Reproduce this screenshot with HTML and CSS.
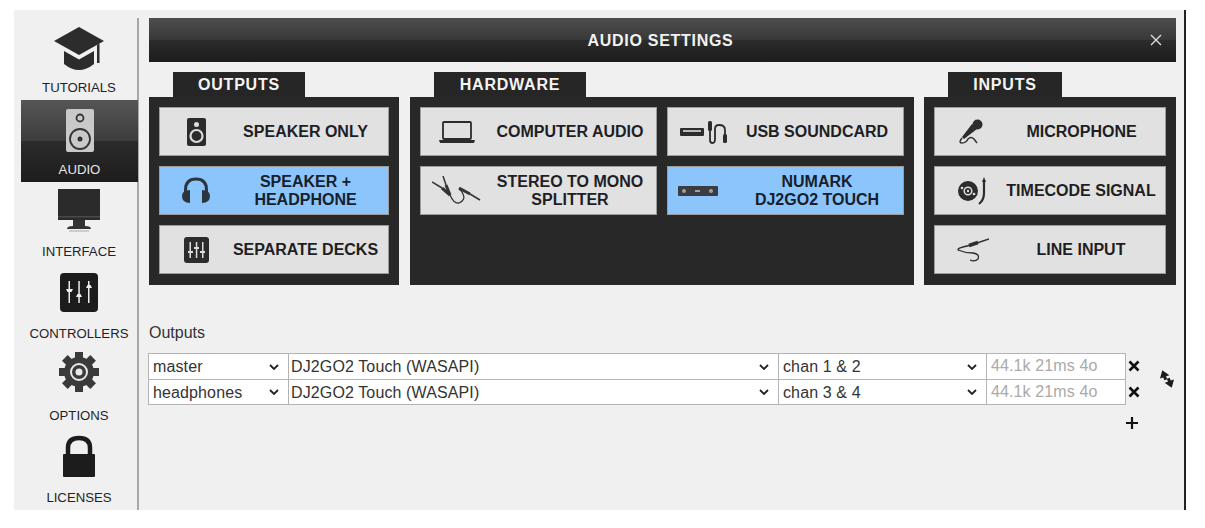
FILE: index.html
```html
<!DOCTYPE html>
<html lang="en">
<head>
<meta charset="utf-8">
<title>Audio Settings</title>
<link rel="stylesheet" href="styles.css">
</head>
<body>
<div class="window">
  <nav class="sidebar">
    <div class="nav-item">
      <svg class="nav-icon" width="60" height="58" viewBox="0 0 60 58"><path fill="#2c2c2c" d="M30 9 L55 23 L30 37 L5 23Z"/><path fill="#2c2c2c" d="M15 33 L30 41.500 L45 33 L45 46 Q30 58 15 46Z"/><path fill="#2c2c2c" d="M48 27 L50.500 25.500 L50.500 45 L48 45Z"/></svg>
      <span class="nav-label">TUTORIALS</span>
    </div>
    <div class="nav-item active">
      <svg class="nav-icon" width="60" height="58" viewBox="0 0 60 58"><rect x="16" y="9" width="28" height="43" rx="2" fill="#c9c9c9"/><circle cx="30" cy="18" r="3.500" fill="none" stroke="#333" stroke-width="1.800"/><circle cx="30" cy="39" r="10" fill="none" stroke="#333" stroke-width="1.800"/><circle cx="30" cy="39" r="2.500" fill="#333"/></svg>
      <span class="nav-label">AUDIO</span>
    </div>
    <div class="nav-item">
      <svg class="nav-icon" width="60" height="58" viewBox="0 0 60 58"><rect x="9" y="7" width="42" height="31" fill="#2b2b2b"/><rect x="9" y="34" width="42" height="1.500" fill="#4a4a4a"/><rect x="24" y="38" width="12" height="6" fill="#333"/><path fill="#333" d="M18 47 Q18 44 24 44 L36 44 Q42 44 42 47Z"/><rect x="20" y="48" width="20" height="2" fill="#ccc"/></svg>
      <span class="nav-label">INTERFACE</span>
    </div>
    <div class="nav-item">
      <svg class="nav-icon" width="60" height="58" viewBox="0 0 60 58"><rect x="11" y="9" width="38" height="39" rx="4" fill="#1c1c1c"/><g fill="#eee"><rect x="19.500" y="17" width="1.500" height="22"/><rect x="29.300" y="17" width="1.500" height="22"/><rect x="39" y="17" width="1.500" height="22"/><path d="M17 25 L24 25 L22.500 28 L18.500 28Z"/><path d="M27 33 L33 33 L31.500 30 L28.500 30Z"/><path d="M37 24 L43 24 L41.500 21 L38.500 21Z"/></g></svg>
      <span class="nav-label">CONTROLLERS</span>
    </div>
    <div class="nav-item">
      <svg class="nav-icon" width="60" height="58" viewBox="0 0 60 58"><g fill="#3a3a3a"><circle cx="30" cy="26" r="15"/><rect x="26" y="6" width="8" height="40"/><rect x="26" y="6" width="8" height="40" transform="rotate(45 30 26)"/><rect x="26" y="6" width="8" height="40" transform="rotate(90 30 26)"/><rect x="26" y="6" width="8" height="40" transform="rotate(135 30 26)"/></g><circle cx="30" cy="26" r="8" fill="none" stroke="#e8e8e8" stroke-width="2"/><circle cx="30" cy="26" r="3.500" fill="#e8e8e8"/></svg>
      <span class="nav-label">OPTIONS</span>
    </div>
    <div class="nav-item">
      <svg class="nav-icon" width="60" height="58" viewBox="0 0 60 58"><path fill="none" stroke="#1c1c1c" stroke-width="4.500" d="M19 27 L19 20 Q19 10 30 10 Q41 10 41 20 L41 27"/><rect x="14" y="26" width="32" height="23" rx="1" fill="#1c1c1c"/></svg>
      <span class="nav-label">LICENSES</span>
    </div>
  </nav>

  <main class="content">
    <header class="titlebar">
      <span class="title">AUDIO SETTINGS</span>
      <svg class="close" width="14" height="14" viewBox="0 0 14 14"><path d="M2 2 L12 12 M12 2 L2 12" stroke="#ddd" stroke-width="1.400"/></svg>
    </header>

    <div class="groups">
      <section class="group group-outputs">
        <div class="tab tab-outputs">OUTPUTS</div>
        <div class="panel panel-single">
          <div class="btn">
            <span class="btn-icon"><svg width="19" height="28" viewBox="0 0 19 28"><rect width="19" height="28" rx="2" fill="#2c2c2c"/><circle cx="9.500" cy="6.500" r="2.500" fill="#ddd"/><circle cx="9.500" cy="18" r="6" fill="none" stroke="#ddd" stroke-width="2.200"/></svg></span>
            <span class="btn-text">SPEAKER ONLY</span>
          </div>
          <div class="btn on">
            <span class="btn-icon"><svg width="28" height="27" viewBox="0 0 28 27"><path d="M3.500 17 L3.500 13 Q3.500 2 14 2 Q24.500 2 24.500 13 L24.500 17" fill="none" stroke="#2c3640" stroke-width="3"/><path d="M8 13 L8 26 Q0 26 0 19 Q0 13 8 13Z" fill="#2c3640"/><path d="M20 13 L20 26 Q28 26 28 19 Q28 13 20 13Z" fill="#2c3640"/></svg></span>
            <span class="btn-text">SPEAKER +<br>HEADPHONE</span>
          </div>
          <div class="btn">
            <span class="btn-icon"><svg width="25" height="26" viewBox="0 0 25 26"><rect width="25" height="26" rx="3" fill="#2c2c2c"/><g fill="#ddd"><rect x="5.500" y="5" width="1.500" height="16"/><rect x="11.800" y="5" width="1.500" height="16"/><rect x="18" y="5" width="1.500" height="16"/><rect x="4" y="14" width="5" height="2"/><rect x="10" y="10" width="5" height="2"/><rect x="16" y="14" width="5" height="2"/></g></svg></span>
            <span class="btn-text">SEPARATE DECKS</span>
          </div>
        </div>
      </section>

      <section class="group group-hardware">
        <div class="tab tab-hardware">HARDWARE</div>
        <div class="panel panel-double">
          <div class="btn">
            <span class="btn-icon"><svg width="36" height="24" viewBox="0 0 36 24"><rect x="4" y="2" width="28" height="17" rx="1" fill="none" stroke="#2c2c2c" stroke-width="1.800"/><path d="M0 20 L36 20 L35 23 L1 23Z" fill="#2c2c2c"/></svg></span>
            <span class="btn-text">COMPUTER AUDIO</span>
          </div>
          <div class="btn">
            <span class="btn-icon"><svg width="48" height="24" viewBox="0 0 48 24"><rect x="0" y="8" width="24" height="8" rx="1" fill="#2c2c2c"/><rect x="3" y="10" width="18" height="2" fill="#bbb"/><rect x="28" y="1" width="4" height="10" rx="1.500" fill="#2c2c2c"/><rect x="43" y="14" width="4" height="9" rx="1.500" fill="#2c2c2c"/><path d="M30 10 L30 20 Q30 23 32.500 23 Q35 23 35 19 L35 9 Q35 5 39 5 Q45 5 45 10 L45 15" fill="none" stroke="#2c2c2c" stroke-width="1.800"/></svg></span>
            <span class="btn-text">USB SOUNDCARD</span>
          </div>
          <div class="btn">
            <span class="btn-icon"><svg width="50" height="30" viewBox="0 0 50 30"><g fill="none" stroke="#333"><path d="M0 6 L10 12" stroke-width="1.500"/><path d="M10 12 L18 19" stroke-width="3"/><path d="M11 0 L14 9" stroke-width="1.500"/><path d="M14 9 L18 19" stroke-width="3"/><path d="M18 19 Q22 28 27 27 Q34 24 31 18 Q29 13 27 14" stroke-width="1.300"/><path d="M27 12 L38 18" stroke-width="3"/><path d="M38 18 L48 24" stroke-width="1.500"/></g></svg></span>
            <span class="btn-text">STEREO TO MONO<br>SPLITTER</span>
          </div>
          <div class="btn on">
            <span class="btn-icon numark"><svg width="40" height="10" viewBox="0 0 40 10"><rect width="40" height="10" rx="1" fill="#3a3c44"/><g fill="#a8a098"><circle cx="6" cy="5" r="2"/><circle cx="33" cy="5" r="2"/><rect x="17" y="4" width="5" height="2"/></g></svg></span>
            <span class="btn-text">NUMARK<br>DJ2GO2 TOUCH</span>
          </div>
        </div>
      </section>

      <section class="group group-inputs">
        <div class="tab tab-inputs">INPUTS</div>
        <div class="panel panel-single">
          <div class="btn">
            <span class="btn-icon"><svg width="24" height="26" viewBox="0 0 24 26"><path d="M13 5 L18 10 L5 20 L3 18Z" fill="#2c2c2c"/><circle cx="18.500" cy="5.500" r="5" fill="#2c2c2c"/><path d="M3 19 Q-1 24 3 24 Q7 24 9 20 Q12 17 15 20 L18 24" fill="none" stroke="#2c2c2c" stroke-width="1.400"/></svg></span>
            <span class="btn-text">MICROPHONE</span>
          </div>
          <div class="btn">
            <span class="btn-icon inset-right"><svg width="30" height="28" viewBox="0 0 30 28"><circle cx="10" cy="14" r="10" fill="#2c2c2c"/><circle cx="10" cy="14" r="3.800" fill="none" stroke="#ddd" stroke-width="1.500"/><circle cx="10" cy="14" r="1.200" fill="#ddd"/><circle cx="4" cy="11" r="1.300" fill="#ddd"/><circle cx="16" cy="17" r="1.300" fill="#ddd"/><path d="M26 3 L26 16 Q26 23 21 27" fill="none" stroke="#2c2c2c" stroke-width="2.200"/><path d="M24 5 L26 0 L28 5Z" fill="#2c2c2c"/></svg></span>
            <span class="btn-text">TIMECODE SIGNAL</span>
          </div>
          <div class="btn">
            <span class="btn-icon inset-right"><svg width="32" height="24" viewBox="0 0 32 24"><path d="M20 5 L32 1" stroke="#333" stroke-width="1.500"/><path d="M12 7.500 L21 4.500" stroke="#2c2c2c" stroke-width="3.500"/><path d="M12 7.500 Q0 10 1 12 Q8 15 16 15 Q23 16 21 21 Q18 24 13 22" fill="none" stroke="#2c2c2c" stroke-width="1.300"/></svg></span>
            <span class="btn-text">LINE INPUT</span>
          </div>
        </div>
      </section>
    </div>

    <div class="section-label">Outputs</div>
    <div class="routing">
      <div class="routing-table">
        <div class="route">
          <select class="cell cell-role"><option>master</option></select>
          <select class="cell cell-device"><option>DJ2GO2 Touch (WASAPI)</option></select>
          <select class="cell cell-chan"><option>chan 1 &amp; 2</option></select>
          <div class="cell cell-info">44.1k 21ms 4o</div>
        </div>
        <div class="route">
          <select class="cell cell-role"><option>headphones</option></select>
          <select class="cell cell-device"><option>DJ2GO2 Touch (WASAPI)</option></select>
          <select class="cell cell-chan"><option>chan 3 &amp; 4</option></select>
          <div class="cell cell-info">44.1k 21ms 4o</div>
        </div>
      </div>
      <div class="marks">
        <svg class="mark" width="12" height="12" viewBox="0 0 12 12"><path d="M1.500 1.500 L10.500 10.500 M10.500 1.500 L1.500 10.500" stroke="#111" stroke-width="2.600"/></svg>
        <svg class="mark" width="12" height="12" viewBox="0 0 12 12"><path d="M1.500 1.500 L10.500 10.500 M10.500 1.500 L1.500 10.500" stroke="#111" stroke-width="2.600"/></svg>
        <svg class="mark plus" width="14" height="14" viewBox="0 0 14 14"><path d="M7 1 L7 13 M1 7 L13 7" stroke="#111" stroke-width="2.200"/></svg>
      </div>
      <svg class="swap" width="18" height="20" viewBox="0 0 18 20"><g fill="#1c1c1c"><path transform="rotate(-20 6 6)" d="M6 1 L11 8 L7.500 8 L7.500 11 L4.500 11 L4.500 8 L1 8Z"/><path transform="rotate(-20 12 14)" d="M12 19 L7 12 L10.500 12 L10.500 9 L13.500 9 L13.500 12 L17 12Z"/></g></svg>
    </div>
  </main>
</div>
</body>
</html>
```
FILE: styles.css
```css
* { box-sizing: border-box; }
html, body { margin: 0; padding: 0; background: #fff; }
body {
  width: 1205px;
  height: 528px;
  overflow: hidden;
  padding: 10px 0 0 14px;
  font-family: "Liberation Sans", Arial, sans-serif;
  color: #222;
}
.window {
  width: 1172px;
  height: 500px;
  background: #f0f0f0;
  border-right: 2px solid #222;
  display: flex;
  padding-top: 8px;
}
.sidebar {
  width: 125px;
  flex: none;
  padding-left: 7px;
  border-right: 2px solid #a8a8a8;
  display: grid;
  grid-template-rows: repeat(6, 1fr);
}
.nav-item {
  display: flex;
  flex-direction: column;
  align-items: center;
  color: #1f1f2a;
}
.nav-icon { display: block; flex: none; }
.nav-label {
  font-size: 13.200px;
  line-height: 16px;
  margin-top: 4px;
  white-space: nowrap;
}
.nav-item.active {
  color: #e6e6e6;
  margin-right: -1px;
  background: linear-gradient(#565656 0, #3c3c3c 50%, #2c2c2c 50%, #1c1c1c 100%);
}
.content {
  flex: 1;
  padding-left: 10px;
  padding-right: 10px;
}
.titlebar {
  height: 44px;
  position: relative;
  display: flex;
  align-items: center;
  justify-content: center;
  background: linear-gradient(#4e4e4e 0, #383838 50%, #2c2c2c 50%, #1c1c1c 100%);
}
.title { color: #f2f2f2; font-weight: 700; font-size: 16px; letter-spacing: .7px; margin-right: 4px; padding-top: 1px; }
.close { position: absolute; right: 13px; top: 15px; }
.groups {
  display: flex;
  gap: 10px;
  margin-top: 10px;
}
.group { display: flex; flex-direction: column; }
.group-outputs { width: 250px; margin-right: 1px; }
.group-hardware { width: 504px; }
.group-inputs { width: 252px; }
.tab {
  height: 25px;
  margin-left: 24px;
  background: #262626;
  color: #f4f4f4;
  font-weight: 700;
  font-size: 16px;
  letter-spacing: .8px;
  line-height: 25px;
  text-align: center;
}
.tab-outputs { width: 132px; }
.tab-hardware { width: 152px; }
.tab-inputs { width: 114px; }
.panel {
  height: 188px;
  background: #282828;
  padding: 10px;
  display: grid;
  gap: 10px;
  grid-template-rows: 49px 49px 49px;
}
.panel-single { grid-template-columns: 1fr; }
.panel-double { grid-template-columns: 1fr 1fr; }
.btn {
  display: flex;
  align-items: center;
  background: #e1e1e1;
  border: 1px solid #9c9c9c;
  color: #1e1e24;
  font-weight: 700;
  font-size: 16px;
  line-height: 18px;
}
.btn.on { background: #8cc5fb; color: #16202c; }
.btn-icon {
  width: 72px;
  flex: none;
  display: flex;
  justify-content: center;
  align-items: center;
}
.btn-icon svg { display: block; }
.numark { width: 60px; }
.inset-right { width: 76px; }
.btn-text { flex: 1; text-align: center; padding-top: 1px; }
.btn-icon + .btn-text { margin-left: -9px; }
.numark + .btn-text { margin-left: 3px; }
.inset-right + .btn-text { margin-left: -14px; }
.section-label {
  margin-top: 40px;
  font-size: 16px;
  line-height: 16px;
  color: #333;
}
.routing {
  display: flex;
  align-items: flex-start;
  margin-top: 12px;
  margin-left: -1px;
}
.routing-table {
  width: 978px;
  flex: none;
  border: 1px solid #b4b4b4;
  background: #fff;
}
.route { display: flex; height: 25px; }
.route + .route { border-top: 1px solid #b4b4b4; }
.cell {
  height: 100%;
  border: 0;
  border-radius: 0;
  font: 16px "Liberation Sans", Arial, sans-serif;
  letter-spacing: .12px;
  color: #333;
  outline: 0;
  margin: 0;
  padding: 0 0 0 4px;
}
select.cell {
  appearance: none;
  background: #fff url("data:image/svg+xml,%3Csvg xmlns='http://www.w3.org/2000/svg' width='10' height='6' viewBox='0 0 10 6'%3E%3Cpath d='M1 1 L5 5 L9 1' fill='none' stroke='%23222' stroke-width='1.800'/%3E%3C/svg%3E") no-repeat right 9px center;
}
.cell + .cell { border-left: 1px solid #b4b4b4; }
.cell-role { width: 139px; }
.cell-device { width: 490px; padding-left: 2px; }
.cell-chan { width: 208px; }
.cell-info {
  width: 139px;
  color: #aaa;
  background: #fff;
  line-height: 24px;
}
.marks {
  width: 14px;
  margin-left: 1px;
  flex: none;
  display: flex;
  flex-direction: column;
  align-items: center;
  padding-top: 7px;
  gap: 14px;
}
.mark { display: block; flex: none; }
.plus { margin-top: 4px; margin-left: -4px; }
.swap { display: block; flex: none; margin-left: 17px; margin-top: 16px; }
```
